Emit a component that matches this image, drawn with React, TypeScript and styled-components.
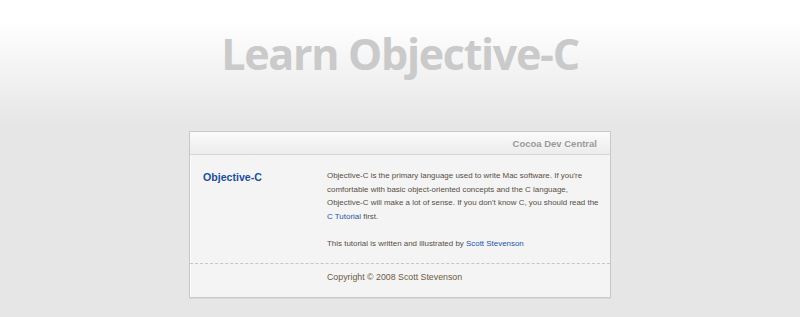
import React from "react";
import styled, { createGlobalStyle } from "styled-components";

const Global = createGlobalStyle`
  html, body { margin: 0; padding: 0; }
  body {
    background: #e6e6e6;
    font-family: "Liberation Sans", Arial, sans-serif;
  }
`;

const Page = styled.div`
  min-height: 317px;
  background: linear-gradient(to bottom, #ffffff 0px, #ffffff 20px, #e6e6e6 125px, #e6e6e6 100%);
  display: flex;
  flex-direction: column;
  align-items: center;
`;

const Title = styled.h1`
  margin: 25px 0 0;
  height: 106px;
  font-family: "Open Sans", sans-serif;
  font-weight: 700;
  font-size: 43px;
  letter-spacing: -1.3px;
  line-height: 58px;
  color: #cacaca;
  text-align: center;
`;

const Card = styled.div`
  width: 420px;
  border: 1px solid #c8c8c8;
  background: #f4f4f4;
  box-shadow: inset 1px 0 0 #fbfbfb, 0 1px 0 #dadada;
`;

const Header = styled.div`
  height: 22px;
  border-bottom: 1px solid #d6d6d6;
  background: linear-gradient(to bottom, #fbfbfb, #ececec);
  display: flex;
  align-items: center;
  justify-content: flex-end;
  padding-right: 13px;
  font-size: 9.5px;
  font-weight: 700;
  color: #9a9a9a;
`;

const Body = styled.div`
  display: grid;
  grid-template-columns: 110px 285px;
  column-gap: 14px;
  padding: 14px 0 13px 13px;
`;

const Heading = styled.h2`
  margin: 0;
  font-size: 10.6px;
  font-weight: 700;
  color: #1b4d9a;
  line-height: 16px;
`;

const Text = styled.div`
  font-size: 7.95px;
  line-height: 13.5px;
  color: #574e44;
  white-space: nowrap;
`;

const Para = styled.p<{ $gap?: number }>`
  margin: 0 0 ${(p) => p.$gap ?? 0}px;
`;

const Link = styled.a`
  color: #1f55a8;
  text-decoration: none;
`;

const Footer = styled.div`
  border-top: 1px dashed #c6c6c6;
  padding: 7px 0 0 137px;
  height: 26px;
  font-size: 8.8px;
  line-height: 13px;
  color: #6e5a45;
`;

export default function App() {
  return (
    <>
      <Global />
      <Page>
        <Title>Learn Objective-C</Title>
        <Card>
          <Header>Cocoa Dev Central</Header>
          <Body>
            <Heading>Objective-C</Heading>
            <Text>
              <Para $gap={13.5}>
                Objective-C is the primary language used to write Mac software. If you're
                <br />
                comfortable with basic object-oriented concepts and the C language,
                <br />
                Objective-C will make a lot of sense. If you don't know C, you should read the
                <br />
                <Link href="#">C Tutorial</Link> first.
              </Para>
              <Para>
                This tutorial is written and illustrated by <Link href="#">Scott Stevenson</Link>
              </Para>
            </Text>
          </Body>
          <Footer>Copyright © 2008 Scott Stevenson</Footer>
        </Card>
      </Page>
    </>
  );
}
